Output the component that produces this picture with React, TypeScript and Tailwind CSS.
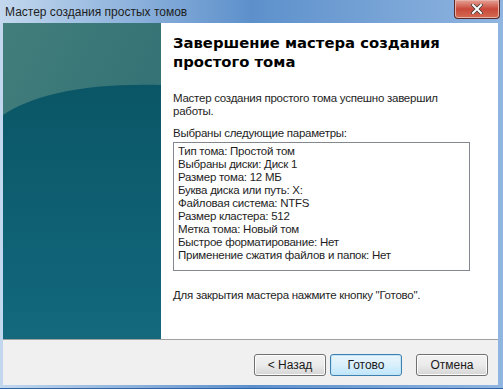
const params = [
  "Тип тома: Простой том",
  "Выбраны диски: Диск 1",
  "Размер тома: 12 МБ",
  "Буква диска или путь: X:",
  "Файловая система: NTFS",
  "Размер кластера: 512",
  "Метка тома: Новый том",
  "Быстрое форматирование: Нет",
  "Применение сжатия файлов и папок: Нет",
];

function SidePanel() {
  return (
    <svg width="158" height="316" viewBox="0 0 158 316" className="block">
      <defs>
        <linearGradient id="top" x1="0" y1="0" x2="1" y2="1">
          <stop offset="0" stopColor="#427e7b" />
          <stop offset="1" stopColor="#2a6a72" />
        </linearGradient>
        <linearGradient id="low" x1="0" y1="0" x2="0" y2="1">
          <stop offset="0" stopColor="#0a5666" />
          <stop offset="0.6" stopColor="#0f6174" />
          <stop offset="1" stopColor="#14697d" />
        </linearGradient>
      </defs>
      <rect width="158" height="316" fill="url(#top)" />
      <path d="M0 92 C 30 72, 80 60, 158 62 L158 316 L0 316 Z" fill="url(#low)" />
    </svg>
  );
}

function WinButton({ label, focused = false }: { label: string; focused?: boolean }) {
  return (
    <div
      className={
        "w-[72px] h-[22px] rounded-[3px] border flex items-center justify-center text-[12px] text-[#1a1a1a] " +
        (focused
          ? "border-[#3c7fb1] bg-gradient-to-b from-[#eaf6fd] via-[#d9f0fc] to-[#bee6fd] shadow-[inset_0_0_0_1px_#c4e5f6]"
          : "border-[#707070] bg-gradient-to-b from-[#f2f2f2] via-[#ebebeb] to-[#d5d5d5] shadow-[inset_0_0_0_1px_#fcfcfc]")
      }
    >
      {label}
    </div>
  );
}

export default function App() {
  return (
    <div
      className="w-[503px] h-[389px] flex flex-col bg-gradient-to-r from-[#c3d8ee] via-[#5d90cb] to-[#8fb5e0] pl-[3px] pr-[5px] pb-[3px] border-b-[1px] border-[#2f64a6]"
      style={{ fontFamily: '"Liberation Sans", Arial, sans-serif' }}
    >
      <div className="h-[23px] flex items-start justify-between shrink-0">
        <div className="text-[12px] text-[#1e1e1e] pl-[2px] pt-[5px] leading-[14px]">
          Мастер создания простых томов
        </div>
        <div className="w-[46px] h-[19px] -mr-[2px] rounded-b-[4px] border border-t-0 border-[#5a2a2a] bg-gradient-to-b from-[#e3a195] via-[#c9483a] to-[#d36a52] flex items-center justify-center shadow-[inset_0_0_0_1px_#e8b2a8]">
          <svg width="12" height="10" viewBox="0 0 12 10">
            <path d="M2 1 L10 9 M10 1 L2 9" stroke="#3a3a3a" strokeWidth="3.4" strokeLinecap="square" />
            <path d="M2 1 L10 9 M10 1 L2 9" stroke="#ffffff" strokeWidth="2" strokeLinecap="square" />
          </svg>
        </div>
      </div>
      <div className="flex-1 flex flex-col bg-[#f0f0f0]">
        <div className="h-[316px] flex shrink-0">
          <SidePanel />
          <div className="flex-1 bg-white pl-[12px] pt-[10px] text-[11.5px] tracking-[-0.25px] text-[#1e1e1e]">
            <div
              className="text-[14.8px] font-bold leading-[19px] tracking-normal text-black"
              style={{ fontFamily: '"DejaVu Sans", Verdana, sans-serif' }}
            >
              Завершение мастера создания
              <br />
              простого тома
            </div>
            <div className="mt-[21px] leading-[13px]">
              Мастер создания простого тома успешно завершил
              <br />
              работы.
            </div>
            <div className="mt-[9px] leading-[13px]">Выбраны следующие параметры:</div>
            <div className="mt-[2px] w-[297px] h-[129px] border border-[#828790] pl-[4px] pt-[2px] leading-[13px]">
              {params.map((p) => (
                <div key={p}>{p}</div>
              ))}
            </div>
            <div className="mt-[18px] leading-[13px]">
              Для закрытия мастера нажмите кнопку "Готово".
            </div>
          </div>
        </div>
        <div className="border-t border-[#a0a0a0] flex-1 flex items-start justify-end pr-[10px] pt-[14px]">
          <div className="flex">
            <WinButton label="< Назад" />
            <div className="w-[4px]" />
            <WinButton label="Готово" focused />
            <div className="w-[14px]" />
            <WinButton label="Отмена" />
          </div>
        </div>
      </div>
    </div>
  );
}
